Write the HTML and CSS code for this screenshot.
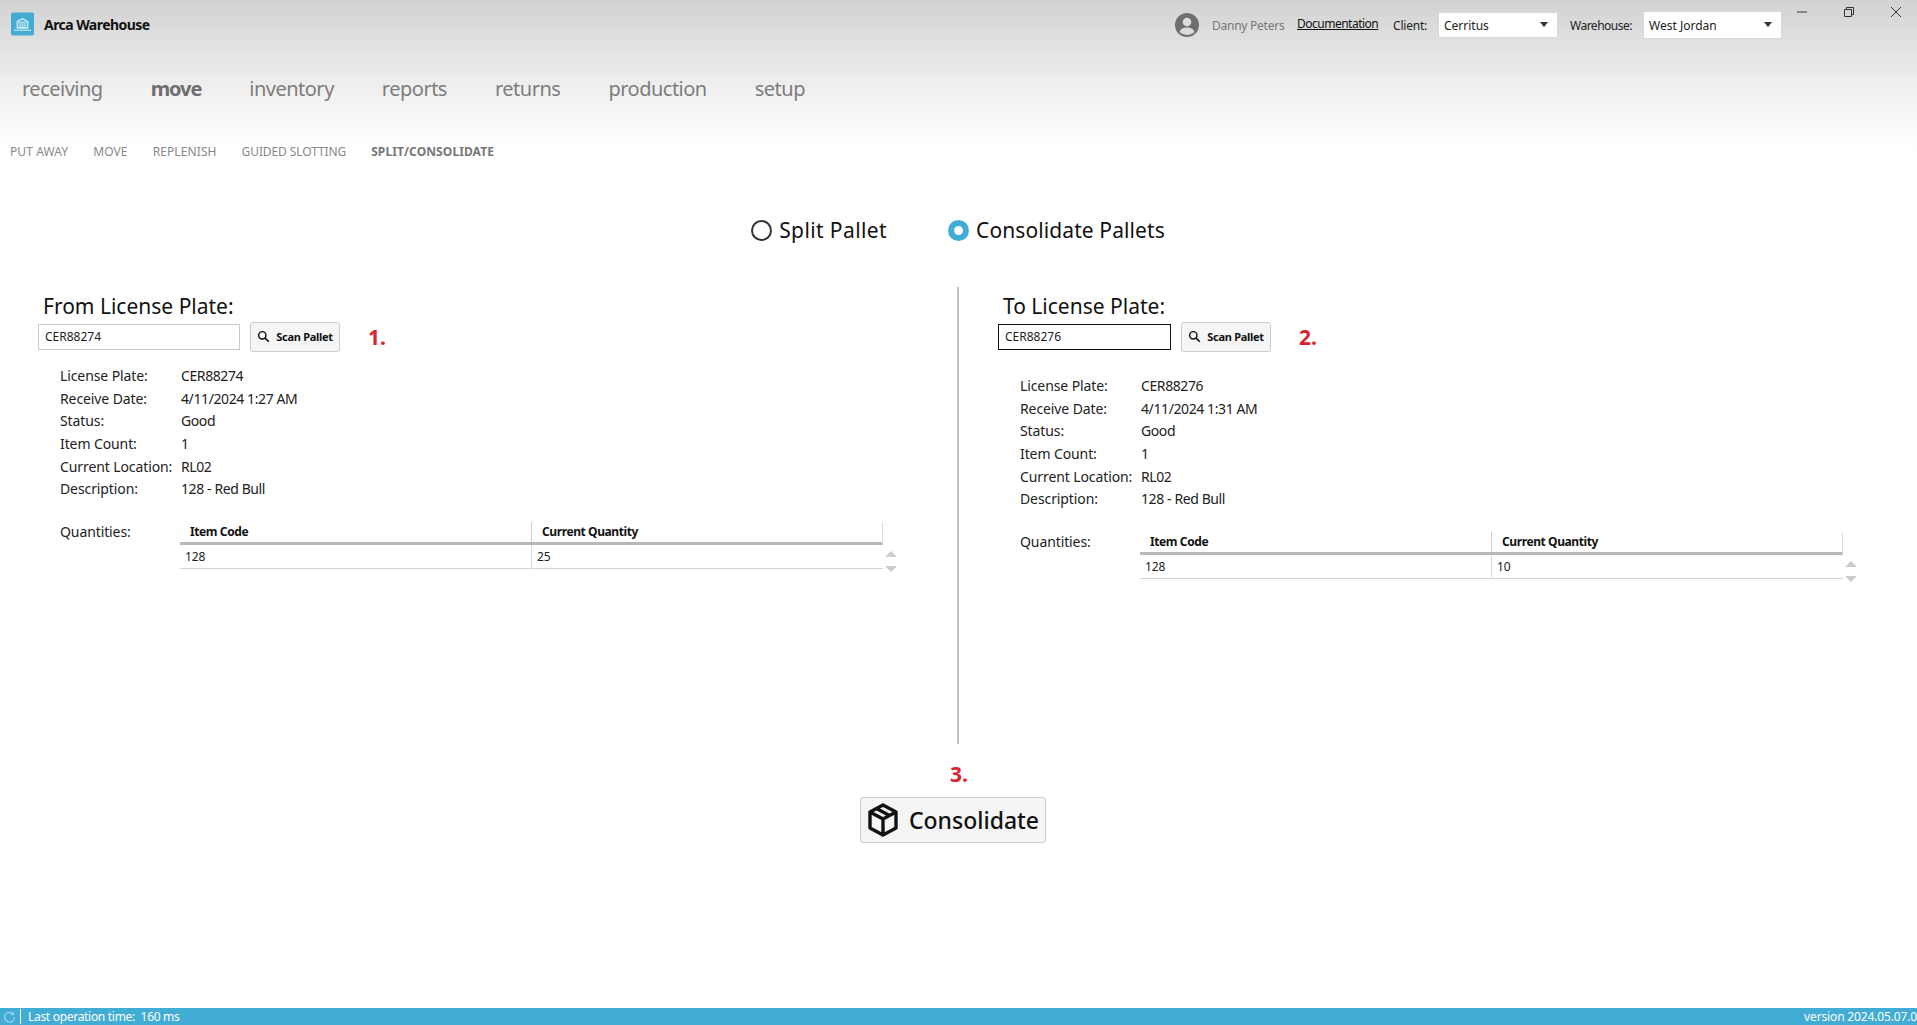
FILE: index.html
```html
<!DOCTYPE html>
<html lang="en">
<head>
<meta charset="utf-8">
<title>Arca Warehouse</title>
<link rel="stylesheet" href="styles.css">
</head>
<body>
<div class="app">
  <header class="header">
    <div class="topbar">
      <div class="brand">
        <svg class="logo" viewBox="0 0 24 24" width="23" height="24"><rect width="24" height="24" rx="2" fill="#41add4"/><path d="M6.500 9.500 12 6.500l5.500 3V16h-11z" fill="none" stroke="#e4f4fa" stroke-width="1.200"/><path d="M6.500 10h11M8 12h8M8 14h8M8 16h8M3 18.500h18" stroke="#e4f4fa" stroke-width="1"/></svg>
        <span class="brand-name">Arca Warehouse</span>
      </div>
      <div class="top-tools">
        <svg class="avatar" viewBox="0 0 24 24" width="24" height="24"><circle cx="12" cy="12" r="12" fill="#6f6f6f"/><circle cx="12" cy="9" r="4.300" fill="#dcdcdc"/><path d="M4.500 19c1.500-3.500 4-4.500 7.500-4.500s6 1 7.500 4.500A11 11 0 0 1 12 22a11 11 0 0 1-7.500-3z" fill="#dcdcdc"/></svg>
        <span class="user">Danny Peters</span>
        <a class="doc-link" href="#">Documentation</a>
        <label class="top-label">Client:</label>
        <div class="select select-client"><span>Cerritus</span><i class="caret"></i></div>
        <label class="top-label top-label-wh">Warehouse:</label>
        <div class="select select-wh"><span>West Jordan</span><i class="caret"></i></div>
      </div>
      <div class="win-controls">
        <svg viewBox="0 0 12 12" width="12" height="12"><path d="M1 6h10" stroke="#333" stroke-width="1"/></svg>
        <svg viewBox="0 0 12 12" width="12" height="12"><path d="M1.500 3.500h7v7h-7zM3.500 3.500v-2h7v7h-2" fill="none" stroke="#333" stroke-width="1"/></svg>
        <svg viewBox="0 0 12 12" width="12" height="12"><path d="M1 1l10 10M11 1 1 11" stroke="#333" stroke-width="1"/></svg>
      </div>
    </div>
    <nav class="nav">
      <a>receiving</a><a class="active">move</a><a>inventory</a><a>reports</a><a>returns</a><a>production</a><a>setup</a>
    </nav>
    <nav class="subnav">
      <a>PUT AWAY</a><a>MOVE</a><a>REPLENISH</a><a class="tight">GUIDED SLOTTING</a><a class="active">SPLIT/CONSOLIDATE</a>
    </nav>
  </header>

  <main class="main">
    <div class="modes">
      <label class="mode mode-split"><span class="radio"></span>Split Pallet</label>
      <label class="mode"><span class="radio radio-on"></span>Consolidate Pallets</label>
    </div>

    <div class="panels">
      <section class="panel panel-from">
        <h2 class="plate-title">From License Plate:</h2>
        <div class="scan-row">
          <input class="plate-input" value="CER88274" readonly>
          <button class="scan-btn"><svg viewBox="0 0 16 16" width="13" height="13"><circle cx="6.500" cy="6.500" r="4.500" fill="none" stroke="#111" stroke-width="1.800"/><path d="m10 10 4.500 4.500" stroke="#111" stroke-width="2"/></svg>Scan Pallet</button>
          <span class="step">1.</span>
        </div>
        <dl class="details">
          <dt>License Plate:</dt><dd>CER88274</dd>
          <dt>Receive Date:</dt><dd>4/11/2024 1:27 AM</dd>
          <dt>Status:</dt><dd>Good</dd>
          <dt>Item Count:</dt><dd>1</dd>
          <dt>Current Location:</dt><dd>RL02</dd>
          <dt>Description:</dt><dd>128 - Red Bull</dd>
        </dl>
        <div class="quantities">
          <span class="q-label">Quantities:</span>
          <div class="q-table">
            <div class="q-head"><span>Item Code</span><span>Current Quantity</span></div>
            <div class="q-row"><span>128</span><span>25</span></div>
          </div>
          <div class="q-scroll"><i class="up"></i><i class="down"></i></div>
        </div>
      </section>

      <div class="divider"></div>

      <section class="panel panel-to">
        <h2 class="plate-title">To License Plate:</h2>
        <div class="scan-row">
          <input class="plate-input focused" value="CER88276" readonly>
          <button class="scan-btn"><svg viewBox="0 0 16 16" width="13" height="13"><circle cx="6.500" cy="6.500" r="4.500" fill="none" stroke="#111" stroke-width="1.800"/><path d="m10 10 4.500 4.500" stroke="#111" stroke-width="2"/></svg>Scan Pallet</button>
          <span class="step">2.</span>
        </div>
        <dl class="details">
          <dt>License Plate:</dt><dd>CER88276</dd>
          <dt>Receive Date:</dt><dd>4/11/2024 1:31 AM</dd>
          <dt>Status:</dt><dd>Good</dd>
          <dt>Item Count:</dt><dd>1</dd>
          <dt>Current Location:</dt><dd>RL02</dd>
          <dt>Description:</dt><dd>128 - Red Bull</dd>
        </dl>
        <div class="quantities">
          <span class="q-label">Quantities:</span>
          <div class="q-table">
            <div class="q-head"><span>Item Code</span><span>Current Quantity</span></div>
            <div class="q-row"><span>128</span><span>10</span></div>
          </div>
          <div class="q-scroll"><i class="up"></i><i class="down"></i></div>
        </div>
      </section>
    </div>

    <div class="action">
      <span class="step step-3">3.</span>
      <button class="consolidate-btn">
        <svg viewBox="0 0 32 34" width="32" height="34"><path d="M16 2 29 9v16l-13 7-13-7V9z M3 9l13 7 13-7M16 16v16M9.500 5.500l13 7" fill="none" stroke="#111" stroke-width="3.400" stroke-linejoin="round"/></svg>
        Consolidate
      </button>
    </div>
  </main>

  <footer class="status">
    <div class="status-left">
      <svg viewBox="0 0 16 16" width="13" height="13"><path d="M13 5.500A6 6 0 1 0 14 9" fill="none" stroke="#9fd4e8" stroke-width="1.500"/><path d="M13.500 1.500v4.500H9z" fill="#9fd4e8"/></svg>
      <span class="status-sep"></span>
      <span class="status-time">Last operation time:&nbsp; 160 ms</span>
    </div>
    <span class="version">version 2024.05.07.0</span>
  </footer>
</div>
</body>
</html>
```
FILE: styles.css
```css
* { box-sizing: border-box; }
html, body { margin: 0; height: 100%; }
body { font-family: "Noto Sans", "Liberation Sans", sans-serif; color: #111; background: #fff; overflow: hidden; }
.app { height: 1025px; display: flex; flex-direction: column; }

.header { height: 165px; flex: none; background: linear-gradient(#d2d2d2 0, #f0f0f0 90px, #fff 150px); display: flex; flex-direction: column; }
.topbar { height: 50px; display: flex; align-items: flex-start; }
.brand { display: flex; align-items: center; gap: 10px; padding: 12px 0 0 11px; }
.brand-name { font-size: 14px; font-weight: 700; letter-spacing: -0.55px; color: #111; }
.top-tools { margin-left: auto; display: flex; align-items: center; padding-top: 11px; font-size: 12px; }
.avatar { margin-right: 13px; }
.user { color: #777; width: 85px; letter-spacing: -0.25px; }
.doc-link { color: #111; text-decoration: underline; width: 96px; letter-spacing: -0.5px; margin-top: -3px; }
.top-label { color: #222; width: 45px; letter-spacing: -0.2px; }
.top-label-wh { width: 73px; margin-left: 12px; letter-spacing: -0.5px; }
.select { height: 26px; background: #fff; border: 1px solid #d8d8d8; display: flex; align-items: center; justify-content: space-between; padding: 0 9px 0 5px; color: #222; }
.select-client { width: 120px; }
.select-wh { width: 139px; height: 28px; }
.caret { width: 0; height: 0; border: 4px solid transparent; border-top: 5px solid #333; border-bottom: 0; margin-top: -2px; }
.win-controls { display: flex; gap: 35px; padding: 6px 15px 0 14px; }

.nav { height: 62px; padding: 6px 0 0 22px; display: flex; gap: 48px; font-size: 20px; letter-spacing: -0.5px; color: #7d7d7d; line-height: 66px; }
.nav .active { font-weight: 700; color: #6e6e6e; letter-spacing: -1.1px; }
.subnav { display: flex; gap: 25px; padding-left: 10px; font-size: 12px; letter-spacing: 0.1px; color: #888; margin-top: 31px; line-height: 18px; }
.subnav .tight { letter-spacing: -0.1px; }
.subnav .active { font-weight: 700; color: #777; }

.main { flex: 1; display: flex; flex-direction: column; }
.modes { height: 122px; display: flex; justify-content: center; gap: 61px; padding: 50px 1px 0 0; font-size: 21px; letter-spacing: 0.1px; color: #111; }
.mode { display: inline-flex; align-items: center; gap: 7px; height: 30px; }
.mode-split { letter-spacing: 0.4px; }
.radio { width: 21px; height: 21px; border-radius: 50%; border: 2px solid #333; display: block; }
.radio-on { border: 6px solid #41add4; background: #fff; }

.panels { display: flex; height: 457px; }
.panel { width: 957px; padding-left: 38px; }
.panel-to { flex: 1; padding-left: 39px; }
.divider { width: 2px; background: #c4c4c4; flex: none; }
.plate-title { margin: 4px 0 0 5px; font-size: 21px; font-weight: 400; line-height: 30px; }
.scan-row { display: flex; align-items: center; gap: 10px; height: 31px; }
.plate-input { width: 202px; height: 26px; border: 1px solid #c8c8c8; font: 12px "Noto Sans", sans-serif; color: #222; padding: 0 6px; outline: 0; background: #fff; }
.plate-input.focused { width: 173px; border: 1px solid #111; }
.scan-btn { width: 90px; height: 30px; display: inline-flex; align-items: center; justify-content: center; gap: 6px; border: 1px solid #ccc; border-radius: 3px; background: #f5f5f5; font: 700 11px "Noto Sans", sans-serif; letter-spacing: -0.3px; color: #111; padding: 0; }
.step { color: #dc2230; font-weight: 700; font-size: 21px; margin-left: 18px; }

.details { margin: 12px 0 0 22px; display: grid; grid-template-columns: 121px 1fr; grid-auto-rows: 22.7px; font-size: 14px; align-items: center; color: #222; letter-spacing: -0.1px; }
.details dt, .details dd { margin: 0; }
.details dd { letter-spacing: -0.4px; }
.panel-to .details { margin-top: 22px; }
.quantities { display: flex; margin: 22px 0 0 22px; font-size: 14px; letter-spacing: -0.1px; color: #222; }
.q-label { width: 120px; line-height: 20px; }
.q-table { width: 703px; }
.q-head { display: grid; grid-template-columns: 351px 1fr; height: 23px; border-bottom: 3px solid #b8b8b8; border-right: 1px solid #ddd; font-size: 12px; font-weight: 700; letter-spacing: -0.4px; color: #111; }
.q-head span { padding-left: 10px; line-height: 20px; }
.q-head span + span { border-left: 1px solid #ccc; }
.q-row { display: grid; grid-template-columns: 351px 1fr; height: 24px; border-bottom: 1px solid #d4d4d4; font-size: 12px; line-height: 24px; }
.q-row span { padding-left: 5px; }
.q-row span + span { border-left: 1px solid #ddd; }
.q-scroll { display: flex; flex-direction: column; gap: 9px; padding: 29px 0 0 1px; margin-left: 1px; }
.q-scroll i { width: 0; height: 0; border: 6px solid transparent; display: block; }
.q-scroll .up { border-bottom: 6px solid #ccc; border-top: 0; }
.q-scroll .down { border-top: 6px solid #ccc; border-bottom: 0; }

.action { display: flex; flex-direction: column; align-items: center; padding: 16px 0 0 0; margin-left: -11px; }
.step-3 { margin: 0 0 9px 12px; line-height: 28px; }
.consolidate-btn { width: 186px; height: 46px; display: inline-flex; align-items: center; justify-content: center; gap: 10px; border: 1px solid #ccc; border-radius: 3px; background: #f5f5f5; font: 500 23px "Noto Sans", sans-serif; color: #111; padding: 0; }

.status { height: 17px; flex: none; margin-top: auto; background: #41add4; color: #fff; font-size: 12px; display: flex; justify-content: space-between; align-items: center; line-height: 17px; padding: 0 0 0 3px; }
.status-left { display: flex; align-items: center; gap: 4px; }
.status-sep { width: 1px; height: 15px; background: #fff; margin-right: 3px; }
.status-time { letter-spacing: -0.3px; }
.version { letter-spacing: -0.15px; }
```
